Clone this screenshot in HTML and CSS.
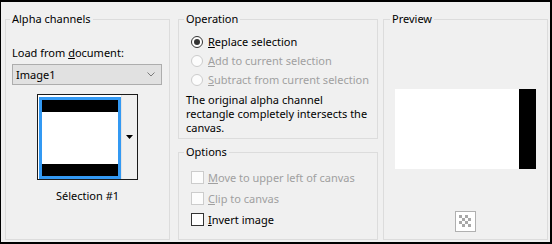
FILE: index.html
```html
<!DOCTYPE html>
<html lang="en">
<head>
    <meta charset="UTF-8">
    <title>Load Selection From Alpha Channel</title>
    <link rel="stylesheet" href="styles.css">
</head>
<body>
    <div class="dialog">
        <fieldset class="group group-alpha">
            <legend>Alpha channels</legend>
            <div class="field-label">Load from <u>d</u>ocument:</div>
            <div class="select">
                <span>Image1</span>
                <svg width="8" height="5" viewBox="0 0 8 5"><path d="M0.5 0.5 L4 4 L7.5 0.5" fill="none" stroke="#7a7a7a" stroke-width="1"/></svg>
            </div>
            <div class="thumb-picker">
                <div class="thumb">
                    <div class="thumb-bar"></div>
                    <div class="thumb-fill"></div>
                    <div class="thumb-bar"></div>
                </div>
                <div class="thumb-btn">
                    <svg width="7" height="4" viewBox="0 0 7 4"><path d="M0 0 H7 L3.5 4 Z" fill="#000"/></svg>
                </div>
            </div>
            <div class="thumb-caption">Sélection #1</div>
        </fieldset>

        <div class="col-mid">
            <fieldset class="group group-op">
                <legend>Operation</legend>
                <div class="radio checked"><span class="radio-mark"></span><span><u>R</u>eplace selection</span></div>
                <div class="radio disabled"><span class="radio-mark"></span><span><u>A</u>dd to current selection</span></div>
                <div class="radio disabled"><span class="radio-mark"></span><span><u>S</u>ubtract from current selection</span></div>
                <p class="note">The original alpha channel<br>rectangle completely intersects the<br>canvas.</p>
            </fieldset>
            <fieldset class="group group-options">
                <legend>Options</legend>
                <div class="check disabled"><span class="check-mark"></span><span><u>M</u>ove to upper left of canvas</span></div>
                <div class="check disabled"><span class="check-mark"></span><span><u>C</u>lip to canvas</span></div>
                <div class="check"><span class="check-mark"></span><span><u>I</u>nvert image</span></div>
            </fieldset>
        </div>

        <fieldset class="group group-preview">
            <legend>Preview</legend>
            <div class="preview-img">
                <div class="preview-white"></div>
                <div class="preview-black"></div>
            </div>
            <div class="checker">
                <svg width="21" height="21" viewBox="0 0 21 21">
                    <rect x="0.5" y="0.5" width="20" height="20" fill="#fff" stroke="#b0b0b0"/>
                    <g fill="#a8a8a8">
                        <rect x="4" y="4" width="3" height="3"/><rect x="10" y="4" width="3" height="3"/>
                        <rect x="7" y="7" width="3" height="3"/><rect x="13" y="7" width="3" height="3"/>
                        <rect x="4" y="10" width="3" height="3"/><rect x="10" y="10" width="3" height="3"/>
                        <rect x="7" y="13" width="3" height="3"/><rect x="13" y="13" width="3" height="3"/>
                    </g>
                </svg>
            </div>
        </fieldset>
    </div>
</body>
</html>
```

FILE: styles.css
```css
* {
    margin: 0;
    padding: 0;
    box-sizing: border-box;
}

body {
    width: 552px;
    height: 244px;
    background: #f0f0f0;
    border: 2px solid #000;
    border-left-width: 1px;
    font-family: 'Noto Sans', 'Open Sans', sans-serif;
    font-size: 11px;
    color: #000;
    overflow: hidden;
    white-space: nowrap;
}

u {
    text-underline-offset: 1px;
}

.dialog {
    display: flex;
    height: 100%;
    padding: 9px 0 2px 4px;
}

.group {
    border: 1px solid #dcdcdc;
    min-width: 0;
}

.group legend {
    line-height: 16px;
    padding: 0 2px;
    margin-left: -2px;
}

/* left column */
.group-alpha {
    width: 165px;
    padding: 0 6px;
    margin-right: 8px;
}

.field-label {
    line-height: 16px;
    margin-top: 18px;
}

.select {
    display: flex;
    align-items: center;
    justify-content: space-between;
    width: 150px;
    height: 21px;
    margin-top: 3px;
    padding: 0 6px 0 3px;
    background: #e1e1e1;
    border: 1px solid #adadad;
}

.thumb-picker {
    display: flex;
    width: 101px;
    height: 86px;
    margin: 9px auto 0;
    border: 1px solid #1a1a1a;
    background: #fff;
}

.thumb {
    display: flex;
    flex-direction: column;
    width: 82px;
    height: 82px;
    margin: 2px 0 0 1px;
    border: 3px solid #3399f3;
    background: #fff;
}

.thumb-bar {
    height: 12px;
    background: #000;
}

.thumb-fill {
    flex: 1;
}

.thumb-btn {
    flex: 1;
    display: flex;
    align-items: center;
    justify-content: center;
    background: #f0f0f0;
    border-left: 1px solid #e3e3e3;
}

.thumb-caption {
    text-align: center;
    line-height: 16px;
    margin-top: 8px;
}

/* middle column */
.col-mid {
    display: flex;
    flex-direction: column;
    width: 200px;
    margin-right: 5px;
}

.group-op {
    padding: 5px 7px 3px;
}

.group-options {
    flex: 1;
    margin-top: 5px;
    padding: 7px 7px 0;
}

.radio,
.check {
    display: flex;
    align-items: center;
    padding-left: 5px;
}

.radio {
    height: 19px;
    gap: 5px;
}

.check {
    height: 21px;
    gap: 4px;
}

.radio-mark {
    position: relative;
    width: 12px;
    height: 12px;
    border: 1px solid #333;
    border-radius: 50%;
    background: #fff;
}

.radio.checked .radio-mark::after {
    content: '';
    position: absolute;
    left: 2px;
    top: 2px;
    width: 6px;
    height: 6px;
    border-radius: 50%;
    background: #333;
}

.check-mark {
    width: 13px;
    height: 13px;
    border: 1px solid #333;
    background: #fff;
}

.disabled {
    color: #a0a0a0;
}

.disabled .radio-mark,
.disabled .check-mark {
    border-color: #cccccc;
    background: #fcfcfc;
}

.note {
    line-height: 14px;
    margin-top: 4px;
}

/* right column */
.group-preview {
    width: 165px;
    padding: 0 8px;
}

.preview-img {
    display: flex;
    width: 141px;
    height: 80px;
    margin: 62px auto 0;
}

.preview-white {
    flex: 1;
    background: #fff;
}

.preview-black {
    width: 17px;
    background: #000;
}

.checker {
    display: flex;
    justify-content: center;
    margin-top: 42px;
}
```
